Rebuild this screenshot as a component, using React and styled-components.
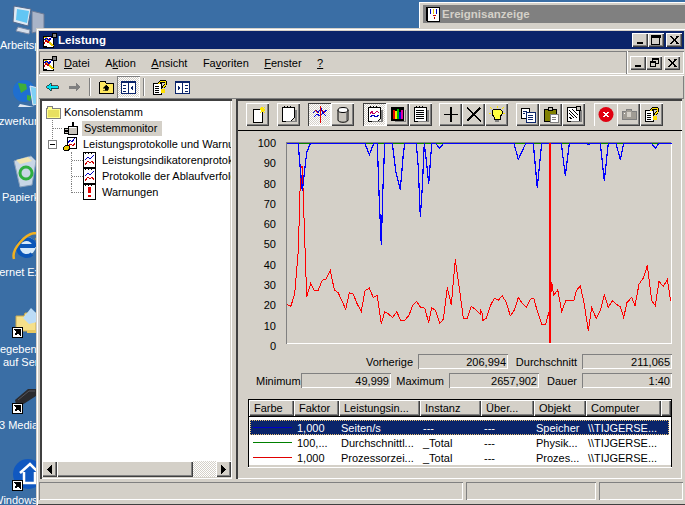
import styled, { createGlobalStyle, css } from "styled-components";

const GlobalStyle = createGlobalStyle`
  html, body {
    margin: 0;
    padding: 0;
    background: #3a6ea5;
    overflow: hidden;
  }
  * {
    box-sizing: border-box;
  }
`;

const FACE = "#d4d0c8";
const raised = css`
  box-shadow: inset 1px 1px 0 #fff, inset -1px -1px 0 #404040, inset -2px -2px 0 #808080;
`;
const sunken = css`
  box-shadow: inset 1px 1px 0 #808080, inset -1px -1px 0 #fff;
`;
const hatch = css`
  background-color: #fff;
  background-image: conic-gradient(${FACE} 25%, #fff 0 50%, ${FACE} 0 75%, #fff 0);
  background-size: 2px 2px;
`;

const Desktop = styled.div`
  position: relative;
  width: 685px;
  height: 505px;
  overflow: hidden;
  background: #3a6ea5;
  font: 11px "Liberation Sans", Arial, sans-serif;
  color: #000;
`;

const DeskIcon = styled.svg`
  position: absolute;
  left: ${(p) => p.$x}px;
  top: ${(p) => p.$y}px;
`;

const DeskLabel = styled.span`
  position: absolute;
  left: ${(p) => p.$x}px;
  top: ${(p) => p.$y}px;
  color: #fff;
  white-space: nowrap;
  line-height: 13px;
`;

const BackWindow = styled.div`
  position: absolute;
  left: 419px;
  top: 2px;
  width: 280px;
  height: 60px;
  padding: 3px 4px;
  background: ${FACE};
  box-shadow: inset 1px 1px 0 #fff;
`;

const BackTitle = styled.div`
  display: flex;
  align-items: center;
  gap: 2px;
  height: 18px;
  padding-left: 3px;
  background: #808080;
  color: ${FACE};
  font-weight: bold;
  font-size: 11.5px;
`;

const Window = styled.div`
  position: absolute;
  left: 36px;
  top: 28px;
  width: 652px;
  height: 477px;
  display: flex;
  flex-direction: column;
  padding: 3px 4px 4px 3px;
  background: ${FACE};
  box-shadow: inset 1px 1px 0 ${FACE}, inset 2px 2px 0 #fff, inset 0 -1px 0 #404040;
`;

const TitleBar = styled.div`
  flex: none;
  display: flex;
  align-items: center;
  height: 18px;
  padding: 0 2px;
  background: #0a246a;
  color: #fff;
  font-weight: bold;
  font-size: 11.5px;
`;

const TitleText = styled.span`
  margin-left: 1px;
  flex: 1;
`;

const CaptionButton = styled.button`
  flex: none;
  width: 16px;
  height: 14px;
  padding: 0;
  margin-left: ${(p) => p.$gap || 0}px;
  display: flex;
  align-items: center;
  justify-content: center;
  border: 0;
  background: ${FACE};
  ${raised}
`;

const MenuBar = styled.div`
  flex: none;
  display: flex;
  align-items: stretch;
  height: 23px;
  margin-top: 2px;
  padding: 0 4px 0 2px;
  box-shadow: inset 1px 1px 0 #808080, inset -1px -1px 0 #fff, inset 0 1px 0 #808080;
`;

const MenuIcon = styled.span`
  display: flex;
  align-items: center;
`;

const MenuItems = styled.div`
  flex: 1;
  display: flex;
  align-items: center;
  gap: 15.5px;
  padding-left: 7px;
`;

const Mnemonic = styled.u`
  text-underline-offset: 1px;
`;

const MdiControls = styled.div`
  flex: none;
  display: flex;
  align-items: center;
  padding-left: 2px;
  border-left: 1px solid #fff;
  box-shadow: -1px 0 0 #808080;
`;

const NavBar = styled.div`
  flex: none;
  display: flex;
  align-items: center;
  height: 24px;
  margin-top: 1px;
  padding-left: 1px;
  box-shadow: inset 0 1px 0 #fff, inset 0 -1px 0 #808080, inset -1px 0 0 #808080;
`;

const NavButton = styled.div`
  flex: none;
  width: 23px;
  height: 22px;
  display: flex;
  align-items: center;
  justify-content: center;
  ${(p) =>
    p.$pressed &&
    css`
      ${hatch}
      box-shadow: inset 1px 1px 0 #808080, inset -1px -1px 0 #fff;
    `}
`;

const NavSeparator = styled.div`
  flex: none;
  width: 2px;
  height: 18px;
  margin: 0 3px;
  box-shadow: inset 1px 0 0 #808080, inset -1px 0 0 #fff;
`;

const Body = styled.div`
  flex: none;
  display: flex;
  gap: 4px;
  height: 380px;
`;

const TreePane = styled.div`
  flex: none;
  width: 192px;
  margin-left: 1px;
  display: flex;
  flex-direction: column;
  padding: 2px 1px 2px 2px;
  background: #fff;
  box-shadow: inset 2px 2px 0 #404040, inset -1px -1px 0 #fff, inset -2px -2px 0 ${FACE};
`;

const TreeList = styled.div`
  flex: 1;
  overflow: hidden;
  padding: 3px 0 0 3px;
`;

const TreeRow = styled.div`
  display: flex;
  align-items: center;
  height: 16px;
  padding-left: ${(p) => p.$indent || 0}px;
  white-space: nowrap;
  & > svg {
    flex: none;
  }
`;

const Guide = styled.span`
  flex: none;
  align-self: flex-start;
  width: ${(p) => p.$w}px;
  height: ${(p) => p.$h}px;
  border-left: 1px dotted #808080;
  background: repeating-linear-gradient(90deg, #808080 0 1px, transparent 1px 2px) 0 8px / 100% 1px no-repeat;
`;

const Expander = styled.span`
  flex: none;
  width: 9px;
  height: 9px;
  margin-right: 5px;
  border: 1px solid #808080;
  background: linear-gradient(#000, #000) center / 5px 1px no-repeat;
`;

const TreeLabel = styled.span`
  flex: none;
  margin-left: ${(p) => p.$gap ?? 4}px;
  padding: 0 2px;
  height: 15px;
  line-height: 15px;
  ${(p) => p.$selected && `background: ${FACE}; padding-right: 5px;`}
`;

const ScrollBar = styled.div`
  flex: none;
  display: flex;
  height: 16px;
  ${hatch}
`;

const ScrollArrow = styled.div`
  flex: none;
  width: 15px;
  display: flex;
  align-items: center;
  justify-content: center;
  background: ${FACE};
  ${raised}
  ${(p) => p.$right && "margin-left: auto;"}
`;

const ScrollThumb = styled.div`
  flex: none;
  width: 136px;
  background: ${FACE};
  ${raised}
`;

const MonitorPane = styled.div`
  flex: none;
  width: 446px;
  display: flex;
  flex-direction: column;
  padding: 4px 0 0 2px;
  box-shadow: inset 2px 2px 0 #404040, inset -1px -1px 0 #fff;
`;

const ChartTools = styled.div`
  flex: none;
  display: flex;
  align-items: flex-start;
  height: 28px;
  padding-left: 8px;
  border-bottom: 1px solid #000;
`;

const ToolButton = styled.div`
  flex: none;
  width: 23px;
  height: 23px;
  margin-left: ${(p) => p.$gap || 0}px;
  display: flex;
  align-items: center;
  justify-content: center;
  background: ${FACE};
  ${raised}
  ${(p) =>
    p.$pressed &&
    css`
      ${hatch}
      box-shadow: inset 1px 1px 0 #404040, inset -1px -1px 0 #fff;
    `}
  ${(p) => p.$flat && "box-shadow: inset 1px 1px 0 #fff;"}
`;

const ChartArea = styled.div`
  flex: none;
  display: flex;
  height: 219px;
  padding: 6px 0 0 10px;
`;

const Scale = styled.div`
  flex: none;
  width: 28px;
  height: 216px;
  display: flex;
  flex-direction: column;
  justify-content: space-between;
  align-items: flex-end;
  line-height: 13px;
`;

const Plot = styled.svg`
  flex: none;
  margin: 5px 0 0 10px;
  width: 386px;
  height: 202px;
  display: block;
`;

const StatRow = styled.div`
  flex: none;
  display: flex;
  justify-content: flex-end;
  height: 15px;
  margin-top: 4px;
  padding-right: 10px;
`;

const StatLabel = styled.span`
  width: ${(p) => p.$w}px;
  padding-right: 5px;
  text-align: right;
  line-height: 16px;
  white-space: nowrap;
`;

const StatValue = styled.span`
  width: 90px;
  height: 15px;
  padding-right: 2px;
  text-align: right;
  line-height: 16px;
  ${sunken}
`;

const Counters = styled.div`
  flex: none;
  margin: 11px 10px 0 10px;
  border: 1px solid #000;
  border-bottom: 0;
  background: #fff;
  box-shadow: inset -1px 0 0 ${FACE}, inset 1px 0 0 ${FACE}, 0 1px 0 #fff;
`;

const HeaderRow = styled.div`
  display: grid;
  grid-template-columns: 45px 45px 81px 61px 53px 52px 75px 10px;
  height: 16px;
  border-bottom: 1px solid #000;
  box-sizing: content-box;
`;

const HeaderCell = styled.div`
  padding-left: 5px;
  line-height: 17px;
  background: ${FACE};
  white-space: nowrap;
  overflow: hidden;
  ${raised}
`;

const CounterList = styled.div`
  height: 50px;
  padding: 3px 2px 2px 1px;
  background: #fff;
  box-shadow: inset 0 -2px 0 ${FACE};
`;

const CounterRow = styled.div`
  display: grid;
  grid-template-columns: 46px 44px 82px 61px 52px 52px 75px;
  height: 15px;
  line-height: 16px;
  white-space: nowrap;
  ${(p) =>
    p.$selected &&
    css`
      background: #0a246a;
      color: #fff;
      outline: 1px dotted #e8c070;
      outline-offset: -1px;
    `}
`;

const Cell = styled.span`
  padding-left: 1px;
`;

const Swatch = styled.span`
  display: block;
  width: 39px;
  height: 1px;
  margin: 7px 0 0 3px;
  background: ${(p) => p.$color};
`;

const StatusBar = styled.div`
  flex: none;
  display: flex;
  gap: 3px;
  height: 18px;
  margin-top: 3px;
`;

const StatusCell = styled.div`
  flex: none;
  width: ${(p) => p.$w}px;
  ${sunken}
`;

const Crisp = { shapeRendering: "crispEdges" };

const PerfIcon = () => (
  <svg width="16" height="16" viewBox="0 0 16 16" {...Crisp}>
    <path d="M2 4h10v11H2z" fill="#fff" stroke="#000" />
    <path d="M11 1h4v4h-4z" fill="#808080" stroke="#000" />
    <path d="M4 5l8 9" stroke="#e8c800" strokeWidth="2" fill="none" />
    <path d="M3 12l2-4 2 3 2-5" stroke="#d00000" fill="none" />
    <path d="M3 8l3-2 2 3 3-4" stroke="#0000c0" fill="none" />
    <path d="M2 14h4v1H2z" fill="#000" />
  </svg>
);

const EventIcon = () => (
  <svg width="14" height="16" viewBox="0 0 14 16" {...Crisp}>
    <path d="M1 1h12v14H1z" fill="#fff" stroke="#000" />
    <path d="M0 1h2v14H0z" fill="#000" />
    <path d="M4 3h1v5H4z" fill="#0000c0" />
    <path d="M7 3h1v5H7z" fill="#e8c800" />
    <path d="M10 3h1v5h-1z" fill="#0000c0" />
    <path d="M7 9h3v1H7zM8 11h1v2H8z" fill="#c00000" />
  </svg>
);

const MinGlyph = () => (
  <svg width="8" height="8" {...Crisp}>
    <path d="M1 6h6v2H1z" fill="#000" />
  </svg>
);
const MaxGlyph = () => (
  <svg width="10" height="10" {...Crisp}>
    <path d="M.5 1.5h8v8h-8zM0 0h9v2H0z" fill="none" stroke="#000" />
    <path d="M0 0h9v2H0z" fill="#000" />
  </svg>
);
const RestoreGlyph = () => (
  <svg width="9" height="9" {...Crisp}>
    <path d="M2.5 .5h6v5h-6z" fill="none" stroke="#000" />
    <path d="M2 0h7v2H2z" fill="#000" />
    <path d="M.5 3.5h5v5h-5z" fill={FACE} stroke="#000" />
    <path d="M0 3h6v2H0z" fill="#000" />
  </svg>
);
const CloseGlyph = () => (
  <svg width="9" height="8" {...Crisp}>
    <path d="M1 0l7 8M8 0L1 8" stroke="#000" strokeWidth="1.6" />
  </svg>
);

const BackArrow = () => (
  <svg width="14" height="10" {...Crisp}>
    <path d="M1 5l5-4v2.5h7v3H6V9z" fill="#00e0f0" stroke="#000" strokeWidth=".6" />
  </svg>
);
const ForwardArrow = () => (
  <svg width="14" height="10" {...Crisp}>
    <path d="M13 5L8 1v2.5H1v3h7V9z" fill="#808080" />
  </svg>
);
const UpFolder = () => (
  <svg width="16" height="14" {...Crisp}>
    <path d="M1 3l2-2h4l1 2h7v10H1z" fill="#ffe860" stroke="#000" />
    <path d="M8 5L5 8h2v2h3V8h1L8 5zM5 10h5" fill="#000" stroke="#000" strokeWidth=".5" />
  </svg>
);
const TreeToggle = ({ flip }) => (
  <svg width="15" height="13" {...Crisp}>
    <path d="M.5 .5h14v12H.5z" fill="#fff" stroke="#0a246a" />
    <path d="M0 0h15v2H0zM7 0h1v13H7z" fill="#0a246a" />
    {flip ? (
      <path d="M3 5l3 2-3 2zM10 4h3v1h-3zM10 7h3v1h-3zM10 10h3v1h-3z" fill="#0a246a" />
    ) : (
      <path d="M12 5l-3 2 3 2zM2 4h3v1H2zM2 7h3v1H2zM2 10h3v1H2z" fill="#0a246a" />
    )}
  </svg>
);
const HelpIcon = () => (
  <svg width="15" height="15" viewBox="0 0 15 15" {...Crisp}>
    <path d="M1 3h8v11H1z" fill="#fff" stroke="#000" />
    <path d="M3 6h4M3 8h4M3 10h4M3 12h4" stroke="#000" />
    <path d="M7 4c0-3 6-4 7-1 0 3-3 3-3 5M10 10h2v2h-2z" fill="none" stroke="#000" strokeWidth="2.6" />
    <path d="M7 4c0-3 6-4 7-1 0 3-3 3-3 5M10 10h2v2h-2z" fill="none" stroke="#ffe000" strokeWidth="1.2" />
  </svg>
);

const SmallFolder = () => (
  <svg width="16" height="14" {...Crisp}>
    <path d="M1 3h1V1h5v2h8v10H1z" fill="#ffff90" stroke="#808080" />
    <path d="M3 5h11v7H3z" fill="#e8e060" />
  </svg>
);
const MonitorNode = () => (
  <svg width="16" height="16" {...Crisp}>
    <path d="M5 6h9v8H5zM1 8h4v2H1zM1 11h4v2H1z" fill="#c8c4bc" stroke="#000" />
    <path d="M9 2h2v4H9z" fill="#000" />
    <path d="M6 7h7v1H6z" fill="#fff" />
  </svg>
);
const LogsIcon = () => (
  <svg width="16" height="16" {...Crisp}>
    <path d="M5 1h9v11H5z" fill="#fff" stroke="#000" />
    <path d="M6 7l2-3 2 2 3-4" stroke="#0000c0" fill="none" />
    <path d="M6 10l3-2 2 2 2-3" stroke="#d00000" fill="none" />
    <path d="M1 12l3-3 3 1 1 3-3 2-3-1z" fill="#e8c800" stroke="#000" />
  </svg>
);
const ChartDoc = () => (
  <svg width="13" height="16" {...Crisp}>
    <path d="M.5 .5h12v15H.5z" fill="#fff" stroke="#000" />
    <path d="M2 1h1v1H2zM5 1h1v1H5zM8 1h1v1H8z" fill="#000" />
    <path d="M2 8l3-3 2 2 4-4" stroke="#0000c0" fill="none" />
    <path d="M2 13l3-4 2 2 2-2 2 3" stroke="#d00000" fill="none" />
  </svg>
);
const AlertDoc = () => (
  <svg width="13" height="16" {...Crisp}>
    <path d="M.5 .5h12v15H.5z" fill="#fff" stroke="#000" />
    <path d="M2 1h1v1H2zM5 1h1v1H5zM8 1h1v1H8z" fill="#000" />
    <path d="M5 3h3v6H5zM5 11h3v2H5z" fill="#e00000" />
  </svg>
);

const T = ({ children }) => (
  <svg width="16" height="17" viewBox="0 0 16 17" {...Crisp}>
    {children}
  </svg>
);
const toolIcons = {
  newSet: (
    <T>
      <path d="M3 3h9v13H3z" fill="#fff" stroke="#000" />
      <path d="M12 0l1 2 2-1-1 2 2 1-2 1 1 2-3-1-2 1 1-2-2-2 2-1z" fill="#ffe800" />
    </T>
  ),
  clear: (
    <T>
      <path d="M1 1h12v11l-3 3H1z" fill="#fff" stroke="#000" />
      <path d="M14 4h2v12H5v-1h9z" fill="#808080" />
      <path d="M3 0h1v2H3zM6 0h1v2H6zM9 0h1v2H9z" fill="#000" />
    </T>
  ),
  current: (
    <T>
      <path d="M1 7l3-3 2 3 3-5 2 5 4-3" stroke="#0000e0" fill="none" />
      <path d="M2 11l3-3 3 2 3-3 3 3" stroke="#0000e0" fill="none" />
      <path d="M8 0h1v17H8z" fill="#e00000" />
      <path d="M3 4l3 3M10 4l3 3" stroke="#e00000" fill="none" />
    </T>
  ),
  log: (
    <T>
      <path d="M3 4v10c0 3 10 3 10 0V4z" fill="#c8c4bc" stroke="#000" shapeRendering="auto" />
      <ellipse cx="8" cy="4" rx="5" ry="2.5" fill="#fff" stroke="#000" shapeRendering="auto" />
      <path d="M11 7v8" stroke="#808080" />
    </T>
  ),
  chart: (
    <T>
      <path d="M1 1h12v12l-2 2H1z" fill="#fff" stroke="#000" />
      <path d="M3 8l2-3 1 3 2-1 2-2 2 2" stroke="#c00060" fill="none" />
      <path d="M3 11l3-2 3 2 3-2" stroke="#0000c0" fill="none" />
      <path d="M14 4h2v12H5v-1h9z" fill="#808080" />
      <path d="M3 0h1v2H3zM6 0h1v2H6zM9 0h1v2H9z" fill="#000" />
    </T>
  ),
  histogram: (
    <T>
      <path d="M1 1h13v14H1z" fill="#000" />
      <path d="M3 4h2v9H3z" fill="#e00000" />
      <path d="M5 5h2v8H5z" fill="#ffe000" />
      <path d="M7 3h2v10H7z" fill="#00c000" />
      <path d="M9 6h2v7H9z" fill="#0000e0" />
      <path d="M11 4h2v9h-2z" fill="#e000a0" />
      <path d="M15 4h1v12H5v-1h10z" fill="#808080" />
    </T>
  ),
  report: (
    <T>
      <path d="M1 1h12v14H1z" fill="#fff" stroke="#000" />
      <path d="M3 4h8M3 6h8M3 8h8M3 10h8M3 12h8" stroke="#000" />
      <path d="M14 4h2v12H5v-1h9z" fill="#808080" />
      <path d="M3 0h1v2H3zM6 0h1v2H6zM9 0h1v2H9z" fill="#000" />
    </T>
  ),
  add: (
    <T>
      <path d="M7 1h2v15H7zM1 8h14v1H1z" fill="#000" />
    </T>
  ),
  remove: (
    <T>
      <path d="M1 2l14 13M14 2L1 15" stroke="#000" strokeWidth="1.5" fill="none" />
    </T>
  ),
  light: (
    <T>
      <path d="M5 3h6l2 2v3l-2 3v2H5v-2L3 8V5z" fill="#ffff40" stroke="#000" />
      <path d="M6 14h4v2H6z" fill="#808080" />
      <path d="M1 1l2 2M15 1l-2 2M0 7h2M14 7h2M8 0v2" stroke="#ffe800" />
    </T>
  ),
  copy: (
    <T>
      <path d="M1 2h8v10H1z" fill="#fff" stroke="#000" />
      <path d="M6 6h9v10H6z" fill="#fff" stroke="#0a246a" />
      <path d="M3 5h4M3 7h2M8 9h5M8 11h5M8 13h5" stroke="#0a246a" />
    </T>
  ),
  paste: (
    <T>
      <path d="M1 3h12v12H1z" fill="#808000" stroke="#000" />
      <path d="M5 1h4v3H5z" fill="#c8c4bc" stroke="#000" />
      <path d="M7 8h8v8H7z" fill="#fff" stroke="#808080" />
      <path d="M9 11h4M9 13h4" stroke="#808080" />
    </T>
  ),
  props: (
    <T>
      <path d="M1 1h12v14H1z" fill="#fff" stroke="#000" />
      <path d="M3 4l8 8M3 7l5 5M6 3l6 6M3 11l3 2" stroke="#000" />
      <path d="M14 4h2v12H5v-1h9z" fill="#808080" />
      <path d="M10 0h4v4h-4z" fill="#c8c4bc" stroke="#000" />
    </T>
  ),
  stop: (
    <T>
      <circle cx="8" cy="8.5" r="7.5" fill="#e00010" shapeRendering="auto" />
      <path d="M5.5 6l5 5M10.5 6l-5 5" stroke="#fff" strokeWidth="2" />
    </T>
  ),
  camera: (
    <T>
      <path d="M1 5h4l1-2h4l1 2h4v8H1z" fill="#a09c94" stroke="#808080" />
      <path d="M6 6h4v5H6z" fill={FACE} />
      <path d="M3 7h1v1H3z" fill="#fff" />
    </T>
  ),
  help: <HelpIcon />,
};

// positions read from the reference, in its zoomed crop coordinates
const redA = [[50,510],[62,517],[74,480],[85,350],[92,100],[97,97],[105,340],[110,487],[122,448],[133,470],[145,468],[157,438],[169,434],[181,408],[193,467],[205,476],[217,503],[227,525],[238,476],[250,480],[262,510],[274,532],[285,470],[298,462],[310,490],[322,484],[334,568],[344,533],[356,540],[368,550],[380,533],[392,558],[404,558],[416,545],[428,514],[440,502],[452,520],[464,522],[476,565],[485,520],[497,530],[509,568],[520,555],[532,460],[544,512],[556,376],[568,460],[580,552],[592,552],[604,517],[616,525],[630,540]];
const redB = [[15,526],[22,538],[22,560],[34,552],[46,515],[58,492],[70,498],[82,485],[94,505],[106,545],[118,528],[130,490],[142,507],[154,520],[166,495],[176,492],[188,535],[200,570],[212,570],[224,525],[230,445],[236,483],[248,467],[260,532],[272,500],[284,498],[296,500],[304,470],[316,455],[328,510],[340,590],[350,520],[364,553],[376,530],[388,482],[400,520],[412,500],[424,510],[436,518],[446,550],[456,505],[470,490],[480,515],[492,450],[506,430],[517,394],[530,500],[541,514],[552,442],[565,457],[577,436],[587,500]];
const blueA = [[50,28],[85,28],[88,70],[97,170],[105,100],[110,55],[121,28],[285,28],[298,62],[311,28],[322,28],[328,200],[334,332],[338,180],[344,28],[367,28],[378,115],[391,167],[400,60],[404,28],[439,28],[445,100],[451,248],[457,160],[463,28],[470,90],[476,150],[485,28],[497,28],[509,43],[520,28]];
const blueB = [[117,28],[130,76],[152,28],[175,28],[187,160],[200,28],[259,28],[271,125],[283,28],[335,28],[340,32],[345,28],[376,28],[388,140],[400,28],[423,28],[436,76],[446,28],[530,28],[541,43],[552,28],[590,28]];

const toPoints = (a, b) =>
  [
    ...a.map(([x, y]) => [270 + x / 3 - 286, 135 + y / 3 - 144 + 0.17]),
    ...b.map(([x, y]) => [475 + x / 3 - 286, 135 + y / 3 - 144 + 0.17]),
  ]
    .map(([x, y]) => `${x.toFixed(1)},${y.toFixed(1)}`)
    .join(" ");

const counters = [
  { color: "#0000c8", factor: "1,000", name: "Seiten/s", inst: "---", parent: "---", obj: "Speicher", selected: true },
  { color: "#008000", factor: "100,...", name: "Durchschnittl...", inst: "_Total", parent: "---", obj: "Physik..." },
  { color: "#e00000", factor: "1,000", name: "Prozessorzei...", inst: "_Total", parent: "---", obj: "Prozes..." },
];

const headers = ["Farbe", "Faktor", "Leistungsin...", "Instanz", "Über...", "Objekt", "Computer", ""];
const scale = [100, 90, 80, 70, 60, 50, 40, 30, 20, 10, 0];

const Shortcut = ({ x, y }) => (
  <DeskIcon $x={x} $y={y} width="11" height="11" {...Crisp}>
    <path d="M.5 .5h10v10H.5z" fill="#fff" stroke="#000" />
    <path d="M3 8l3-3M4 3h4v4z" stroke="#000" fill="#000" strokeWidth="1.5" />
  </DeskIcon>
);

const DesktopItems = () => (
  <>
    <DeskIcon $x={12} $y={3} width="34" height="34">
      <path d="M2 3l17 3 -3 17L1 19z" fill="#dfe8f2" stroke="#55688a" />
      <path d="M5 6l12 2-2 12-11-3z" fill="#62c6f4" />
      <path d="M20 8l12 3v16l-12 3z" fill="#a9b4c8" stroke="#6b7a96" />
      <path d="M6 24l12 3-1 4-13-3z" fill="#d6deea" stroke="#7d8ba5" />
    </DeskIcon>
    <DeskLabel $x={0} $y={39}>Arbeitsplatz</DeskLabel>
    <DeskIcon $x={12} $y={78} width="30" height="30">
      <circle cx="12" cy="13" r="11" fill="#1f6fd0" />
      <path d="M6 5l8 1 1 5-6 4zM15 17l5 1-2 5-3-1z" fill="#3fae3a" />
      <path d="M18 8l12 3v14l-9 2z" fill="#7fd0f4" stroke="#dfe8f2" />
      <path d="M8 26l14 3H6z" fill="#dfe8f2" />
    </DeskIcon>
    <DeskLabel $x={-18} $y={115}>Netzwerkumgebung</DeskLabel>
    <DeskIcon $x={12} $y={155} width="26" height="34">
      <path d="M2 6l17-5 5 5-4 24-12 2z" fill="#c8d6e6" stroke="#88a0ba" />
      <path d="M4 5l12-3 4 4-12 3z" fill="#f2e6b0" />
      <circle cx="14" cy="18" r="6" fill="none" stroke="#2fae3f" strokeWidth="3" />
    </DeskIcon>
    <DeskLabel $x={2} $y={191}>Papierkorb</DeskLabel>
    <DeskIcon $x={12} $y={232} width="26" height="30">
      <circle cx="15" cy="14" r="9" fill="#d6eafa" />
      <path d="M23 15a8.5 8.5 0 1 0-3 7M8 14h15" fill="none" stroke="#0a56b8" strokeWidth="4" />
      <path d="M2 27C-1 17 14 1 24 1c3 1 1 6 0 7" fill="none" stroke="#f0b020" strokeWidth="2.5" />
    </DeskIcon>
    <DeskLabel $x={-13} $y={266}>Internet Explorer</DeskLabel>
    <DeskIcon $x={15} $y={306} width="22" height="30">
      <path d="M1 10h8l1-3h11v18H1z" fill="#f6e08a" stroke="#c8a850" />
      <path d="M8 12l8-10 6 6v8l-8 2z" fill="#bcdcf6" />
      <path d="M12 24h10v3H12z" fill="#e8c860" />
    </DeskIcon>
    <Shortcut x={12} y={327} />
    <DeskLabel $x={0} $y={343}>egeben</DeskLabel>
    <DeskLabel $x={3} $y={356}>auf Ser</DeskLabel>
    <DeskIcon $x={14} $y={388} width="23" height="18">
      <path d="M1 12L14 1h8v7L8 17H2z" fill="#2a2a2e" />
      <path d="M4 12l11-9h6" stroke="#55555c" fill="none" />
    </DeskIcon>
    <Shortcut x={12} y={403} />
    <DeskLabel $x={-1} $y={419}>3 Media</DeskLabel>
    <DeskIcon $x={12} $y={458} width="26" height="32">
      <circle cx="16" cy="16" r="15" fill="#1058c0" />
      <path d="M8 15l10-9 9 9M12 14v11h11V14" fill="none" stroke="#fff" strokeWidth="2.5" />
    </DeskIcon>
    <Shortcut x={12} y={480} />
    <DeskLabel $x={-7} $y={494}>Windows</DeskLabel>
  </>
);

export default function App() {
  return (
    <Desktop>
      <GlobalStyle />
      <DesktopItems />
      <BackWindow>
        <BackTitle>
          <EventIcon />
          Ereignisanzeige
        </BackTitle>
      </BackWindow>
      <Window>
        <TitleBar>
          <PerfIcon />
          <TitleText>Leistung</TitleText>
          <CaptionButton><MinGlyph /></CaptionButton>
          <CaptionButton><MaxGlyph /></CaptionButton>
          <CaptionButton $gap={2}><CloseGlyph /></CaptionButton>
        </TitleBar>
        <MenuBar>
          <MenuIcon><PerfIcon /></MenuIcon>
          <MenuItems>
            <span><Mnemonic>D</Mnemonic>atei</span>
            <span>A<Mnemonic>k</Mnemonic>tion</span>
            <span><Mnemonic>A</Mnemonic>nsicht</span>
            <span>Fa<Mnemonic>v</Mnemonic>oriten</span>
            <span><Mnemonic>F</Mnemonic>enster</span>
            <span><Mnemonic>?</Mnemonic></span>
          </MenuItems>
          <MdiControls>
            <CaptionButton><MinGlyph /></CaptionButton>
            <CaptionButton><RestoreGlyph /></CaptionButton>
            <CaptionButton $gap={2}><CloseGlyph /></CaptionButton>
          </MdiControls>
        </MenuBar>
        <NavBar>
          <NavButton><BackArrow /></NavButton>
          <NavButton><ForwardArrow /></NavButton>
          <NavSeparator />
          <NavButton><UpFolder /></NavButton>
          <NavButton $pressed><TreeToggle /></NavButton>
          <NavSeparator />
          <NavButton><HelpIcon /></NavButton>
          <NavButton><TreeToggle flip /></NavButton>
        </NavBar>
        <Body>
          <TreePane>
            <TreeList>
              <TreeRow>
                <SmallFolder />
                <TreeLabel $gap={1}>Konsolenstamm</TreeLabel>
              </TreeRow>
              <TreeRow $indent={7}>
                <Guide $w={11} $h={19} />
                <MonitorNode />
                <TreeLabel $gap={3} $selected>Systemmonitor</TreeLabel>
              </TreeRow>
              <TreeRow $indent={3}>
                <Expander />
                <LogsIcon />
                <TreeLabel $gap={3}>Leistungsprotokolle und Warnungen</TreeLabel>
              </TreeRow>
              <TreeRow $indent={26}>
                <Guide $w={12} $h={16} />
                <ChartDoc />
                <TreeLabel $gap={4}>Leistungsindikatorenprotokolle</TreeLabel>
              </TreeRow>
              <TreeRow $indent={26}>
                <Guide $w={12} $h={16} />
                <ChartDoc />
                <TreeLabel $gap={4}>Protokolle der Ablaufverfolgung</TreeLabel>
              </TreeRow>
              <TreeRow $indent={26}>
                <Guide $w={12} $h={9} />
                <AlertDoc />
                <TreeLabel $gap={4}>Warnungen</TreeLabel>
              </TreeRow>
            </TreeList>
            <ScrollBar>
              <ScrollArrow>
                <svg width="5" height="9" {...Crisp}><path d="M5 0v9L0 4.5z" fill="#000" /></svg>
              </ScrollArrow>
              <ScrollThumb />
              <ScrollArrow $right>
                <svg width="5" height="9" {...Crisp}><path d="M0 0v9l5-4.5z" fill="#000" /></svg>
              </ScrollArrow>
            </ScrollBar>
          </TreePane>
          <MonitorPane>
            <ChartTools>
              <ToolButton>{toolIcons.newSet}</ToolButton>
              <ToolButton $gap={8}>{toolIcons.clear}</ToolButton>
              <ToolButton $gap={8} $pressed>{toolIcons.current}</ToolButton>
              <ToolButton>{toolIcons.log}</ToolButton>
              <ToolButton $gap={9} $pressed>{toolIcons.chart}</ToolButton>
              <ToolButton>{toolIcons.histogram}</ToolButton>
              <ToolButton>{toolIcons.report}</ToolButton>
              <ToolButton $gap={7}>{toolIcons.add}</ToolButton>
              <ToolButton>{toolIcons.remove}</ToolButton>
              <ToolButton>{toolIcons.light}</ToolButton>
              <ToolButton $gap={8}>{toolIcons.copy}</ToolButton>
              <ToolButton>{toolIcons.paste}</ToolButton>
              <ToolButton>{toolIcons.props}</ToolButton>
              <ToolButton $gap={9} $flat>{toolIcons.stop}</ToolButton>
              <ToolButton>{toolIcons.camera}</ToolButton>
              <ToolButton>{toolIcons.help}</ToolButton>
            </ChartTools>
            <ChartArea>
              <Scale>
                {scale.map((n) => (
                  <span key={n}>{n}</span>
                ))}
              </Scale>
              <Plot viewBox="0 -1 386 202">
                <path d="M0 200.5H385.5V0" fill="none" stroke="#fff" shapeRendering="crispEdges" />
                <path d="M.5 201V-1" stroke="#808080" shapeRendering="crispEdges" />
                <path d="M1 -.5H385" stroke="#808080" shapeRendering="crispEdges" />
                <path d="M1 .5H385" stroke="#008000" shapeRendering="crispEdges" />
                <polyline points={toPoints(redA, redB)} fill="none" stroke="#ff0000" strokeWidth="1" shapeRendering="crispEdges" />
                <polyline points={toPoints(blueA, blueB)} fill="none" stroke="#0000ff" strokeWidth="1.2" shapeRendering="crispEdges" />
                <path d="M263 0h2v200h-2z" fill="#ff0000" shapeRendering="crispEdges" />
              </Plot>
            </ChartArea>
            <StatRow>
              <StatLabel $w={60}>Vorherige</StatLabel>
              <StatValue>206,994</StatValue>
              <StatLabel $w={74}>Durchschnitt</StatLabel>
              <StatValue>211,065</StatValue>
            </StatRow>
            <StatRow>
              <StatLabel $w={45}>Minimum</StatLabel>
              <StatValue>49,999</StatValue>
              <StatLabel $w={58}>Maximum</StatLabel>
              <StatValue>2657,902</StatValue>
              <StatLabel $w={43}>Dauer</StatLabel>
              <StatValue>1:40</StatValue>
            </StatRow>
            <Counters>
              <HeaderRow>
                {headers.map((h, i) => (
                  <HeaderCell key={i}>{h}</HeaderCell>
                ))}
              </HeaderRow>
              <CounterList>
                {counters.map((c) => (
                  <CounterRow key={c.name} $selected={c.selected}>
                    <Swatch $color={c.color} />
                    <Cell>{c.factor}</Cell>
                    <Cell>{c.name}</Cell>
                    <Cell>{c.inst}</Cell>
                    <Cell>{c.parent}</Cell>
                    <Cell>{c.obj}</Cell>
                    <Cell>\\TIJGERSE...</Cell>
                  </CounterRow>
                ))}
              </CounterList>
            </Counters>
          </MonitorPane>
        </Body>
        <StatusBar>
          <StatusCell $w={424} />
          <StatusCell $w={130} />
          <StatusCell $w={84} />
        </StatusBar>
      </Window>
    </Desktop>
  );
}
